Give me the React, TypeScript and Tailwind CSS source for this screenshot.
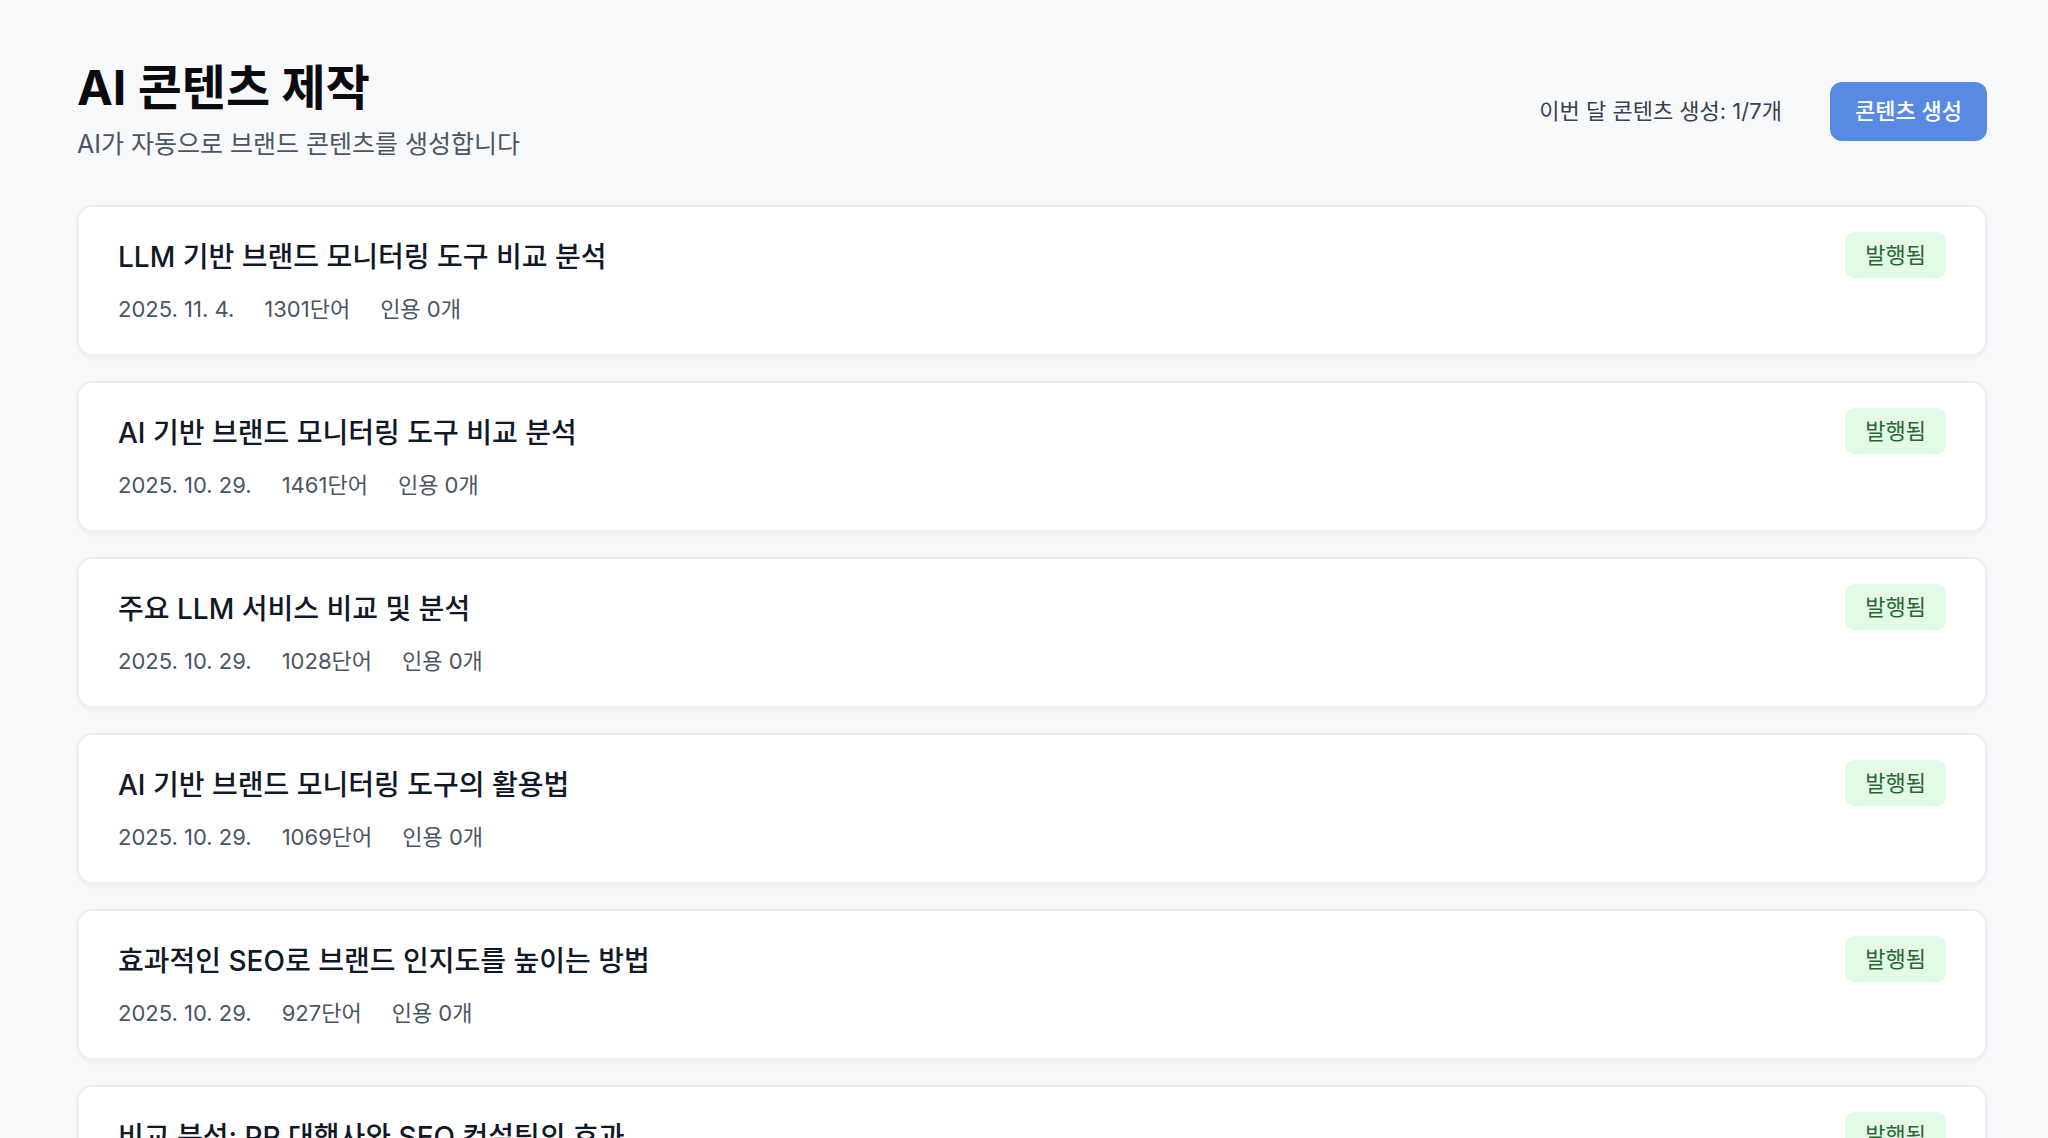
const posts = [
  { title: "LLM 기반 브랜드 모니터링 도구 비교 분석", date: "2025. 11. 4.", words: 1301, cites: 0 },
  { title: "AI 기반 브랜드 모니터링 도구 비교 분석", date: "2025. 10. 29.", words: 1461, cites: 0 },
  { title: "주요 LLM 서비스 비교 및 분석", date: "2025. 10. 29.", words: 1028, cites: 0 },
  { title: "AI 기반 브랜드 모니터링 도구의 활용법", date: "2025. 10. 29.", words: 1069, cites: 0 },
  { title: "효과적인 SEO로 브랜드 인지도를 높이는 방법", date: "2025. 10. 29.", words: 927, cites: 0 },
  { title: "비교 분석: PR 대행사와 SEO 컨설팅의 효과", date: "2025. 10. 29.", words: 1184, cites: 0 },
  { title: "브랜드 가시성을 높이는 콘텐츠 전략", date: "2025. 10. 28.", words: 1012, cites: 0 },
];

function PostCard({ title, date, words, cites }: (typeof posts)[number]) {
  return (
    <div className="flex items-start justify-between rounded-[15px] border-2 border-[#eceef1] bg-white pb-[30px] pl-[39px] pr-[39px] pt-[29px] shadow-[0_2px_4px_rgba(0,0,0,0.06)]">
      <div>
        <h3 className="text-[28px] font-medium leading-[42px] text-[#111827]">{title}</h3>
        <div className="mt-[16px] flex gap-[30px] text-[22px] leading-[30px] text-[#4b5563]">
          <span>{date}</span>
          <span>{words}단어</span>
          <span>인용 {cites}개</span>
        </div>
      </div>
      {/* status badge */}
      <span className="-mt-[4px] flex h-[46px] items-center rounded-[9px] bg-[#e3fbe6] px-[20px] text-[22px] text-[#2a6436]">
        발행됨
      </span>
    </div>
  );
}

export default function App() {
  return (
    <div
      className="min-h-screen bg-[#f8f9fb] pl-[77px] pr-[61px] pt-[60px]"
      style={{ fontFamily: 'Inter, "Noto Sans CJK KR", sans-serif' }}
    >
      {/* Header */}
      <div className="flex items-center justify-between">
        <div>
          <h1 className="text-[48px] font-bold leading-[56px] text-[#0b0b0f]">AI 콘텐츠 제작</h1>
          <p className="mt-[10px] text-[25px] leading-[36px] text-[#4b5563]">AI가 자동으로 브랜드 콘텐츠를 생성합니다</p>
        </div>
        <div className="flex items-center gap-[48px]">
          <span className="text-[22px] text-[#374151]">이번 달 콘텐츠 생성: 1/7개</span>
          <button className="h-[59px] rounded-[12px] bg-[#5889e3] px-[25px] text-[22px] font-medium text-white">
            콘텐츠 생성
          </button>
        </div>
      </div>

      {/* Content list */}
      <div className="mt-[43px] flex flex-col gap-[25px] pb-12">
        {posts.map((p) => (
          <PostCard key={p.title} {...p} />
        ))}
      </div>
    </div>
  );
}
